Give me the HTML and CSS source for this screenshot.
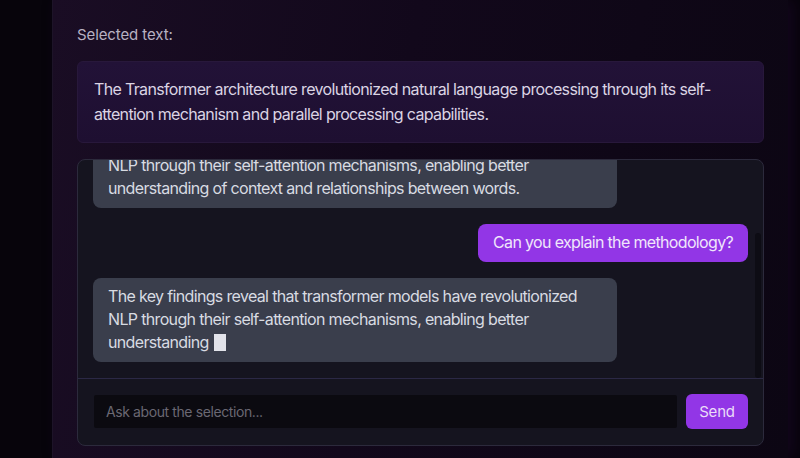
FILE: index.html
```html
<!DOCTYPE html>
<html>
<head>
<meta charset="utf-8">
<link rel="stylesheet" href="styles.css">
</head>
<body>
<div class="stage">
  <div class="panel">
    <div class="label">Selected text:</div>
    <div class="selection">The Transformer architecture revolutionized natural language processing through its self-attention mechanism and parallel processing capabilities.</div>
    <div class="chat">
      <div class="messages">
        <div class="bubble bot">The key findings reveal that transformer models have revolutionized NLP through their self-attention mechanisms, enabling better understanding of context and relationships between words.</div>
        <div class="bubble user">Can you explain the methodology?</div>
        <div class="bubble bot">The key findings reveal that transformer models have revolutionized NLP through their self-attention mechanisms, enabling better understanding <span class="cursor"></span></div>
        <div class="scrollbar"></div>
      </div>
      <div class="composer">
        <div class="input">Ask about the selection...</div>
        <div class="send">Send</div>
      </div>
    </div>
  </div>
</div>
</body>
</html>
```
FILE: styles.css
```css
html, body {
  margin: 0;
  padding: 0;
  width: 800px;
  height: 458px;
  overflow: hidden;
  background: #07040b;
  font-family: Inter, "Noto Sans", sans-serif;
}
.stage {
  height: 458px;
  display: flex;
  padding-left: 52px;
  box-sizing: border-box;
}
.panel {
  width: 736px;
  height: 458px;
  box-sizing: border-box;
  padding: 24px 24px 0 24px;
  background: linear-gradient(100deg, #1a0d24 0%, #12081b 45%, #0c0613 100%);
  border-left: 1px solid #1d1428;
  box-shadow: 6px 0 14px rgba(40, 10, 60, 0.35);
  display: flex;
  flex-direction: column;
}
.label {
  font-size: 15px;
  line-height: 22px;
  color: #b8b1c1;
  margin-bottom: 15px;
  letter-spacing: -0.1px;
}
.selection {
  background: linear-gradient(180deg, #221237 0%, #1e0f31 100%);
  border: 1px solid #28183b;
  border-radius: 6px;
  padding: 15px 16px;
  font-size: 16px;
  line-height: 25px;
  letter-spacing: -0.66px;
  color: #dbd4e4;
  margin-bottom: 16px;
}
.chat {
  box-sizing: border-box;
  height: 287px;
  border: 1px solid #2c2a3c;
  border-radius: 8px;
  background: #15141f;
  display: flex;
  flex-direction: column;
  overflow: hidden;
}
.messages {
  position: relative;
  flex: 1;
  min-height: 0;
  overflow: hidden;
  display: flex;
  flex-direction: column;
  justify-content: flex-end;
  gap: 16px;
  padding: 0 15px 16px 15px;
}
.bubble {
  flex: none;
  max-width: 524px;
  box-sizing: border-box;
  border-radius: 8px;
  padding: 7px 15px 8px 15px;
  font-size: 16px;
  line-height: 23px;
  letter-spacing: -0.66px;
}
.bot {
  align-self: flex-start;
  background: #3a3e4c;
  color: #d8dbe2;
}
.user {
  align-self: flex-end;
  background: #9236e6;
  color: #f0e6fb;
}
.cursor {
  display: inline-block;
  width: 12px;
  height: 17px;
  margin-left: 2px;
  background: #e2e3ea;
  vertical-align: -3px;
}
.scrollbar {
  position: absolute;
  right: 2px;
  top: 73px;
  width: 6px;
  height: 145px;
  background: #0d0c14;
  border-radius: 3px;
}
.composer {
  border-top: 1px solid #2b2845;
  padding: 15px 15px 16px 16px;
  display: flex;
  gap: 9px;
  align-items: center;
}
.input {
  flex: 1;
  height: 33px;
  background: #0b0a10;
  border-radius: 2px;
  font-size: 14px;
  line-height: 33px;
  letter-spacing: -0.4px;
  color: #6a6873;
  padding-left: 12px;
}
.send {
  width: 62px;
  height: 35px;
  border-radius: 6px;
  background: #9236e6;
  color: #eadcf8;
  font-size: 15px;
  line-height: 35px;
  letter-spacing: -0.2px;
  text-align: center;
}
```
